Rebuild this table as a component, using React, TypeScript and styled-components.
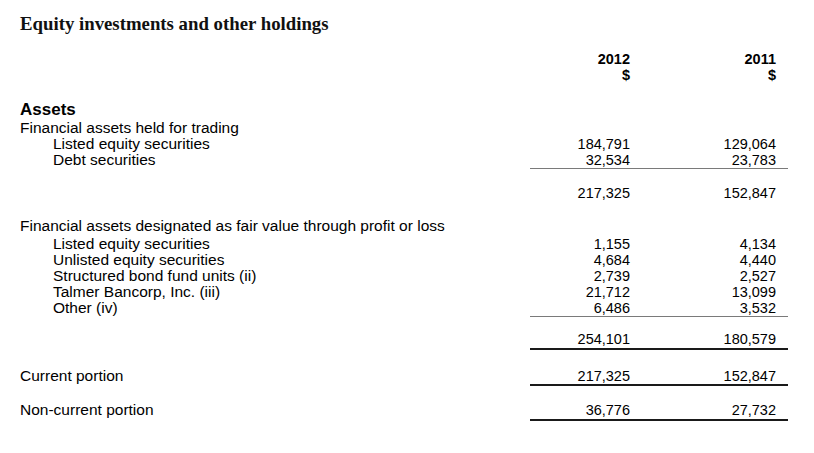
import React from "react";
import styled, { createGlobalStyle } from "styled-components";

const GlobalStyle = createGlobalStyle`
  html, body {
    margin: 0;
    padding: 0;
    background: #ffffff;
  }
`;

const Page = styled.div`
  padding: 14px 0 0 20px;
  width: 794px;
  color: #000;
  font-family: "Liberation Sans", Arial, sans-serif;
`;

const Title = styled.h1`
  margin: 0;
  font-family: "Liberation Serif", "Times New Roman", serif;
  font-weight: bold;
  font-size: 18.8px;
  line-height: 20px;
  color: #111;
`;

const Row = styled.div<{ $top: number; $h?: number }>`
  display: grid;
  grid-template-columns: 510px 112px 146px;
  margin-top: ${(p) => p.$top}px;
  height: ${(p) => p.$h ?? 16}px;
`;

const Label = styled.div<{ $indent?: boolean; $strong?: boolean }>`
  padding-left: ${(p) => (p.$indent ? 33 : 0)}px;
  font-size: ${(p) => (p.$strong ? 17 : 15.5)}px;
  font-weight: ${(p) => (p.$strong ? "bold" : "normal")};
  line-height: ${(p) => (p.$strong ? 18 : 16)}px;
  white-space: nowrap;
`;

const Amount = styled.div<{ $rule?: "thin" | "thick"; $head?: boolean }>`
  text-align: right;
  padding-right: 12px;
  font-size: 14.5px;
  font-weight: ${(p) => (p.$head ? "bold" : "normal")};
  line-height: 16px;
  border-bottom: ${(p) =>
    p.$rule === "thick"
      ? "2px solid #1a1a1a"
      : p.$rule === "thin"
      ? "1px solid #7a7a7a"
      : "none"};
`;

type Line = {
  label?: string;
  indent?: boolean;
  strong?: boolean;
  y2012?: string;
  y2011?: string;
  rule?: "thin" | "thick";
  head?: boolean;
  top: number;
  h?: number;
};

const lines: Line[] = [
  { y2012: "2012", y2011: "2011", head: true, top: 17 },
  { y2012: "$", y2011: "$", head: true, top: 0 },
  { label: "Assets", strong: true, top: 18, h: 18 },
  { label: "Financial assets held for trading", top: 1 },
  { label: "Listed equity securities", indent: true, y2012: "184,791", y2011: "129,064", top: 0 },
  { label: "Debt securities", indent: true, y2012: "32,534", y2011: "23,783", rule: "thin", top: 0, h: 17 },
  { y2012: "217,325", y2011: "152,847", top: 16 },
  { label: "Financial assets designated as fair value through profit or loss", top: 17 },
  { label: "Listed equity securities", indent: true, y2012: "1,155", y2011: "4,134", top: 2 },
  { label: "Unlisted equity securities", indent: true, y2012: "4,684", y2011: "4,440", top: 0 },
  { label: "Structured bond fund units (ii)", indent: true, y2012: "2,739", y2011: "2,527", top: 0 },
  { label: "Talmer Bancorp, Inc. (iii)", indent: true, y2012: "21,712", y2011: "13,099", top: 0 },
  { label: "Other (iv)", indent: true, y2012: "6,486", y2011: "3,532", rule: "thin", top: 0, h: 17 },
  { y2012: "254,101", y2011: "180,579", rule: "thick", top: 14, h: 19 },
  { label: "Current portion", y2012: "217,325", y2011: "152,847", rule: "thick", top: 18, h: 17 },
  { label: "Non-current portion", y2012: "36,776", y2011: "27,732", rule: "thick", top: 17, h: 19 },
];

export default function App() {
  return (
    <>
      <GlobalStyle />
      <Page>
        <Title>Equity investments and other holdings</Title>
        {lines.map((l, i) => (
          <Row key={i} $top={l.top} $h={l.h}>
            <Label $indent={l.indent} $strong={l.strong}>
              {l.label}
            </Label>
            <Amount $rule={l.rule} $head={l.head}>
              {l.y2012}
            </Amount>
            <Amount $rule={l.rule} $head={l.head}>
              {l.y2011}
            </Amount>
          </Row>
        ))}
      </Page>
    </>
  );
}
